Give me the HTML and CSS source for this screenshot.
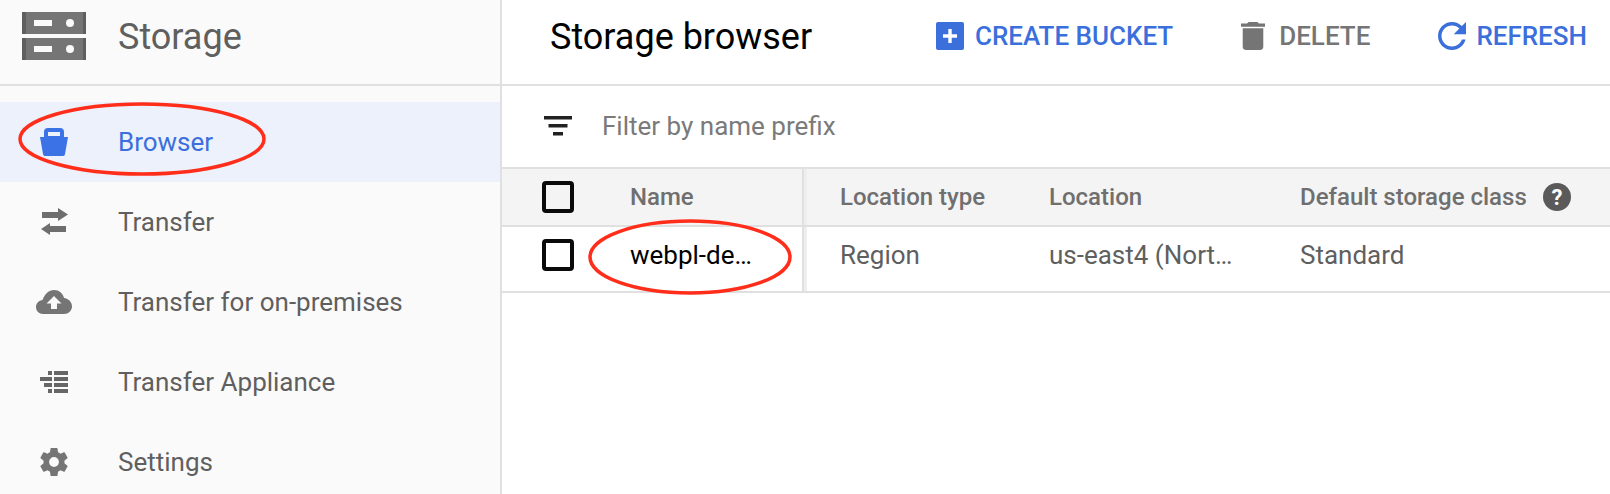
FILE: index.html
```html
<!DOCTYPE html>
<html lang="en">
<head>
<meta charset="utf-8">
<title>Storage browser</title>
<link rel="stylesheet" href="styles.css">
</head>
<body>
<div class="app">
  <aside class="sidebar">
    <div class="brand">
      <svg class="brand-icon" viewBox="0 0 64 48">
        <path fill="#757575" d="M0 0h64v22H0zM0 26h64v22H0z"/>
        <path fill="#5f5f5f" d="M0 0h4v22H0zM61 0h3v22h-3zM0 26h4v22H0zM61 26h3v22h-3z"/>
        <path fill="#fafafa" d="M12 8h18v6H12zM12 34h18v6H12z"/>
        <circle fill="#fafafa" cx="48" cy="11" r="4"/>
        <circle fill="#fafafa" cx="48" cy="37" r="4"/>
      </svg>
      <span class="brand-name">Storage</span>
    </div>
    <nav class="nav">
      <a class="nav-item active">
        <span class="nav-icon"><svg viewBox="0 0 28 28" width="28" height="28"><path fill="#3b73e6" fill-rule="evenodd" d="M4 9V4a4 4 0 0 1 4-4h12a4 4 0 0 1 4 4v5h4l-3 17a2 2 0 0 1-2 2H5a2 2 0 0 1-2-2L0 9zM8 8h12V4H8z"/></svg></span>
        <span>Browser</span>
      </a>
      <a class="nav-item">
        <span class="nav-icon"><svg viewBox="0 0 28 28" width="28" height="28"><path fill="#6e6e6e" d="M2 4h16V0l10 6.500L18 13v-3H2zM1 21l9-6v3h16v6H10v3z"/></svg></span>
        <span>Transfer</span>
      </a>
      <a class="nav-item">
        <span class="nav-icon"><svg viewBox="0 0 36 24" width="36" height="24"><path fill="#757575" d="M18 0c5 0 9 3.500 10 8 4.500.5 8 4 8 8.500 0 4-3.500 7.500-8 7.500H7c-4 0-7-3-7-7 0-3.800 3-6.800 6.600-7C8.500 4 13 0 18 0z"/><path fill="#fafafa" d="M18 6l7.500 7.500H21V19h-6v-5.500h-4.500z"/></svg></span>
        <span>Transfer for on-premises</span>
      </a>
      <a class="nav-item">
        <span class="nav-icon"><svg viewBox="0 0 28 22" width="28" height="22"><path fill="#666" d="M8 0h4v4H8zM14 0h14v4H14zM0 6h12v4H0zM14 6h14v4H14zM4 12h8v4H4zM14 12h14v4H14zM8 18h4v4H8zM14 18h14v4H14z"/></svg></span>
        <span>Transfer Appliance</span>
      </a>
      <a class="nav-item">
        <span class="nav-icon"><svg viewBox="2 2 20 20" width="28" height="28"><path fill="#757575" d="M19.430 12.980c.04-.32.07-.64.07-.98s-.03-.66-.07-.98l2.110-1.650c.19-.15.24-.42.12-.64l-2-3.460c-.12-.22-.39-.3-.61-.22l-2.490 1c-.52-.4-1.080-.73-1.690-.98l-.38-2.650A.49.490 0 0 0 14 2h-4c-.25 0-.46.180-.49.420l-.38 2.650c-.61.250-1.170.590-1.690.980l-2.490-1c-.23-.09-.49 0-.61.220l-2 3.460c-.13.220-.07.490.12.640l2.110 1.650c-.04.320-.07.650-.07.980s.03.660.07.980l-2.110 1.650c-.19.150-.24.420-.12.640l2 3.460c.12.220.39.300.61.220l2.490-1c.52.400 1.080.730 1.690.980l.38 2.650c.03.240.24.420.49.420h4c.25 0 .46-.18.490-.42l.38-2.650c.61-.25 1.170-.59 1.690-.98l2.490 1c.23.090.49 0 .61-.22l2-3.460c.12-.22.07-.49-.12-.64l-2.110-1.650zM12 15.500a3.500 3.500 0 1 1 0-7 3.500 3.500 0 0 1 0 7z"/></svg></span>
        <span>Settings</span>
      </a>
    </nav>
    <svg class="oval oval-browser" viewBox="0 0 248 74"><ellipse cx="124" cy="37" rx="122" ry="35"/></svg>
  </aside>
  <main class="main">
    <header class="toolbar">
      <h1 class="title">Storage browser</h1>
      <div class="actions">
        <a class="action primary">
          <svg viewBox="0 0 28 28" width="28" height="28"><rect fill="#3b6fdc" width="28" height="28" rx="2"/><path fill="#fff" d="M12.300 7h3.400v5.300H21v3.400h-5.300V21h-3.400v-5.300H7v-3.400h5.300z"/></svg>
          <span>CREATE BUCKET</span>
        </a>
        <a class="action muted">
          <svg viewBox="5 3 14 18" width="24" height="28" preserveAspectRatio="none"><path fill="#757575" d="M6 19c0 1.100.9 2 2 2h8c1.100 0 2-.9 2-2V7H6v12zM19 4h-3.500l-1-1h-5l-1 1H5v2h14V4z"/></svg>
          <span>DELETE</span>
        </a>
        <a class="action primary refresh">
          <svg viewBox="4 4 16 16" width="28" height="28"><path fill="#3b6fdc" d="M17.650 6.350C16.200 4.900 14.210 4 12 4c-4.420 0-7.990 3.580-7.990 8s3.570 8 7.990 8c3.730 0 6.840-2.550 7.730-6h-2.080c-.82 2.330-3.040 4-5.650 4-3.310 0-6-2.690-6-6s2.690-6 6-6c1.660 0 3.140.69 4.220 1.780L13 11h7V4l-2.350 2.350z"/></svg>
          <span>REFRESH</span>
        </a>
      </div>
    </header>
    <div class="filter">
      <svg viewBox="0 0 28 20" width="28" height="20"><path fill="#212121" d="M0 0h28v3.500H0zM4.500 8h19v3.500h-19zM9 16h10v3.500H9z"/></svg>
      <span class="filter-text">Filter by name prefix</span>
    </div>
    <div class="table">
      <div class="row head">
        <div class="cell check"><span class="box"></span></div>
        <div class="cell name">Name</div>
        <div class="cell gut"></div>
        <div class="cell">Location type</div>
        <div class="cell">Location</div>
        <div class="cell">Default storage class
          <svg class="help" viewBox="0 0 28 28" width="28" height="28"><circle fill="#5a5a5a" cx="14" cy="14" r="14"/><text x="14" y="21.500" text-anchor="middle" class="help-mark">?</text></svg>
        </div>
      </div>
      <div class="row body">
        <div class="cell check"><span class="box"></span></div>
        <div class="cell name link">webpl-de…</div>
        <div class="cell gut"></div>
        <div class="cell">Region</div>
        <div class="cell">us-east4 (Nort…</div>
        <div class="cell">Standard</div>
      </div>
    </div>
    <svg class="oval oval-name" viewBox="0 0 204 76"><ellipse cx="102" cy="38" rx="100" ry="36"/></svg>
  </main>
</div>
</body>
</html>
```
FILE: styles.css
```css
* { box-sizing: border-box; }
html, body { margin: 0; height: 100%; background: #fff; }
body { font-family: Roboto, "Liberation Sans", sans-serif; overflow: hidden; }
.app { position: relative; display: flex; height: 494px; }
.sidebar { width: 502px; flex: none; background: #fafafa; border-right: 2px solid #e0e0e0; }
.brand { display: flex; align-items: center; height: 86px; border-bottom: 2px solid #e0e0e0; padding-left: 22px; }
.brand-icon { width: 64px; height: 48px; margin-right: 32px; margin-top: -12px; }
.brand-name { font-size: 36px; color: #5f5f5f; margin-top: -10px; }
.nav { padding-top: 16px; }
.nav-item { display: flex; align-items: center; height: 80px; font-size: 26px; color: #5f5f5f; }
.nav-item.active { background: #ecf1fc; color: #3b6fdc; }
.nav-icon { width: 118px; padding-left: 36px; padding-right: 46px; display: flex; align-items: center; justify-content: center; }
.main { flex: 1; min-width: 0; }
.toolbar { display: flex; align-items: center; justify-content: space-between; height: 86px; border-bottom: 2px solid #e0e0e0; padding: 0 23px 12px 48px; }
.title { margin: 2px 0 0; font-size: 36px; font-weight: 400; color: #000; }
.actions { display: flex; gap: 68px; }
.action { display: flex; align-items: center; gap: 11px; font-size: 26px; font-weight: 500; }
.primary { color: #3b6fdc; }
.muted { color: #757575; gap: 14px; }
.refresh { gap: 10px; }
.filter { display: flex; align-items: center; gap: 30px; height: 81px; padding: 0 0 2px 42px; }
.filter-text { font-size: 26px; color: #7a7a7a; }
.table { border-top: 2px solid #e0e0e0; }
.row { display: grid; grid-template-columns: 128px 172px 6px 241px 251px 1fr; align-items: center; font-size: 26px; color: #5f5f5f; }
.head { height: 58px; background: #f4f4f4; border-bottom: 2px solid #e0e0e0; font-size: 24px; font-weight: 500; color: #6f6f6f; }
.body { height: 66px; border-bottom: 2px solid #e0e0e0; padding-bottom: 8px; }
.cell { display: flex; align-items: center; }
.check { padding-left: 40px; }
.box { width: 32px; height: 32px; border: 4px solid #0a0a0a; border-radius: 4px; }
.gut { align-self: stretch; background: #eeeeee; border-left: 2px solid #e0e0e0; margin-right: 1px; }
.body .gut { margin-bottom: -8px; }
.row .cell:nth-child(4) { padding-left: 32px; }
.link { color: #000; }
.help { margin-left: 16px; }
.help-mark { fill: #fff; font-size: 22px; font-weight: 700; }
.oval { position: absolute; fill: none; stroke: #ff2d1a; stroke-width: 3.500; }
.oval-browser { left: 18px; top: 102px; width: 248px; height: 74px; }
.oval-name { left: 588px; top: 219px; width: 204px; height: 76px; }
```
